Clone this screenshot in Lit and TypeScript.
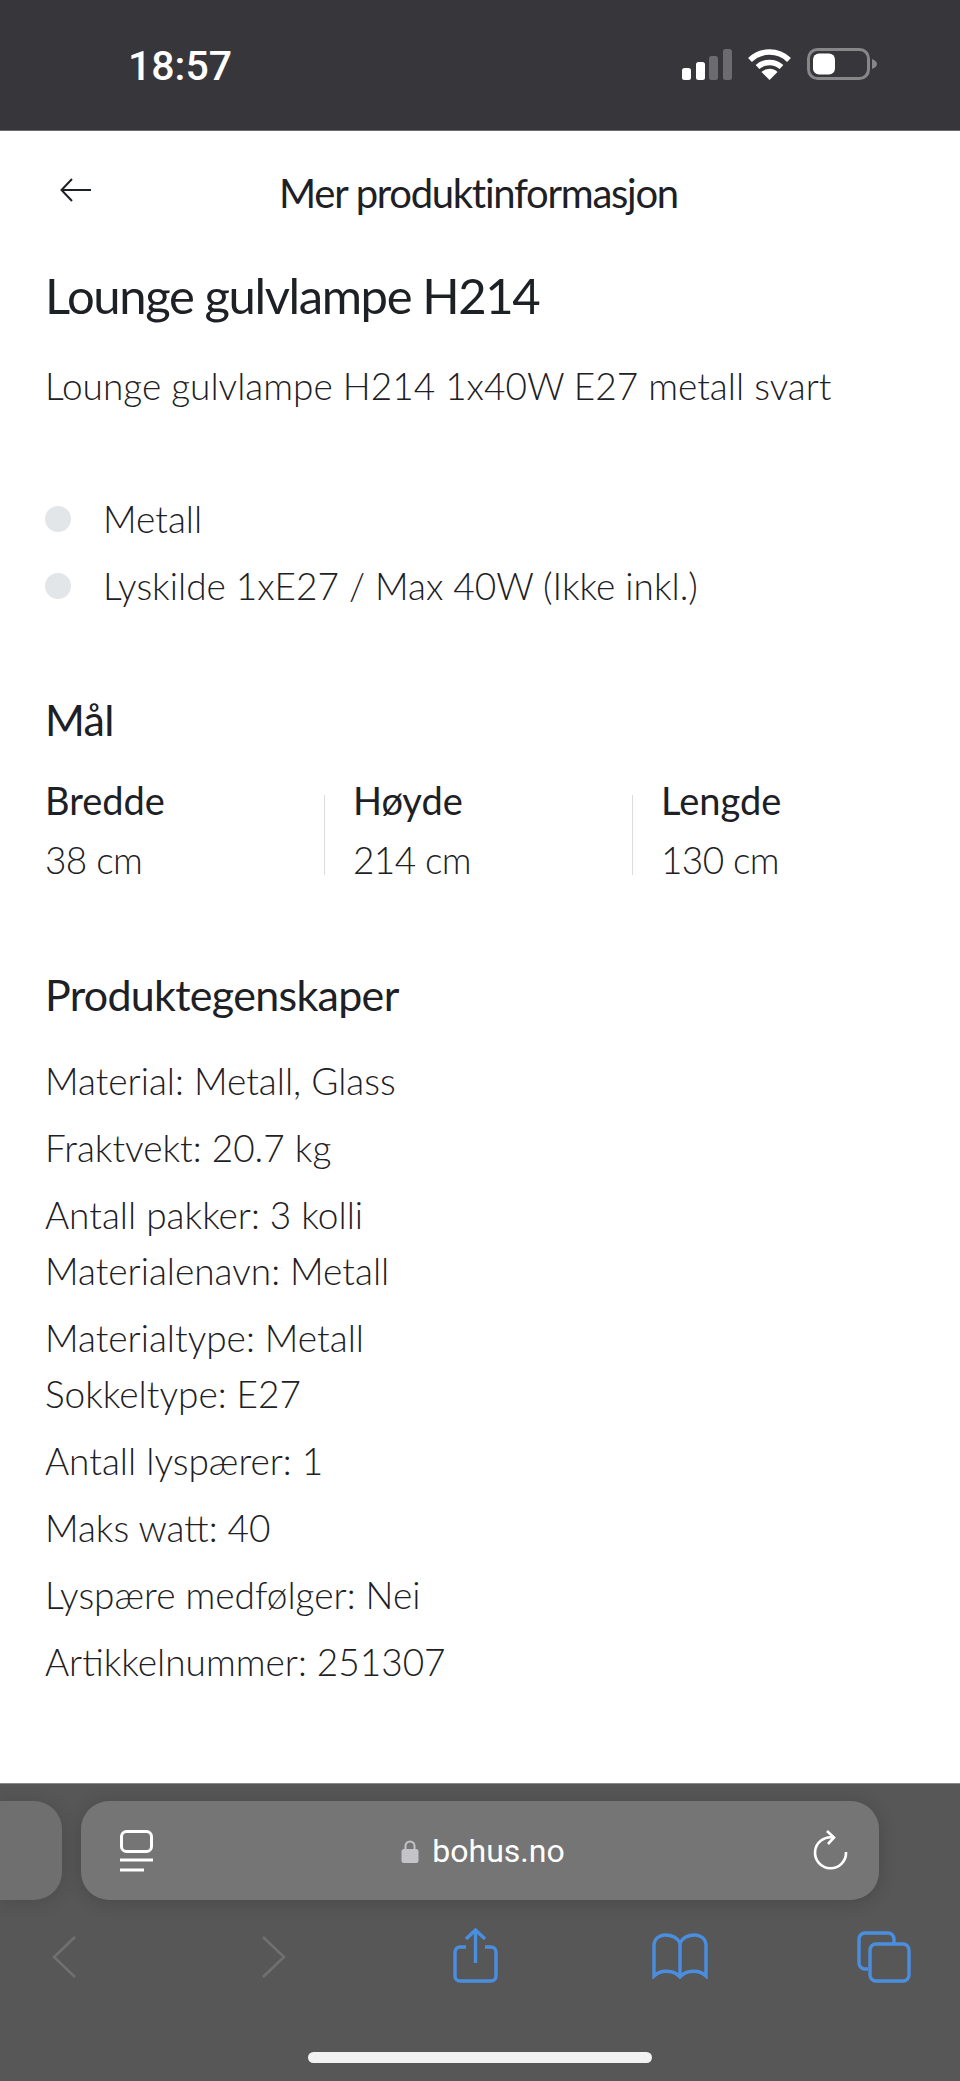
import { LitElement, html, css } from 'lit';
import { customElement } from 'lit/decorators.js';

const bullets = ['Metall', 'Lyskilde 1xE27 / Max 40W (Ikke inkl.)'];
const sizes = [
  ['Bredde', '38 cm'],
  ['Høyde', '214 cm'],
  ['Lengde', '130 cm'],
];
const props = [
  ['Material: Metall, Glass'],
  ['Fraktvekt: 20.7 kg'],
  ['Antall pakker: 3 kolli', 'Materialenavn: Metall'],
  ['Materialtype: Metall', 'Sokkeltype: E27'],
  ['Antall lyspærer: 1'],
  ['Maks watt: 40'],
  ['Lyspære medfølger: Nei'],
  ['Artikkelnummer: 251307'],
];

@customElement('app-root')
export class AppRoot extends LitElement {
  static styles = css`
    :host {
      display: block;
      width: 960px;
      height: 2081px;
      overflow: hidden;
      font-family: Lato, 'Noto Sans', sans-serif;
      color: #1d2024;
    }
    .page {
      display: flex;
      flex-direction: column;
      height: 2081px;
    }
    .status {
      height: 131px;
      flex: none;
      background: #37363b;
      border-bottom: 1px solid #6b6b6e;
      display: flex;
      align-items: center;
      justify-content: space-between;
      padding: 0 83px 0 128px;
      box-sizing: border-box;
      color: #fff;
    }
    .time {
      font-family: Roboto, sans-serif;
      font-size: 41px;
      font-weight: 500;
      margin-top: 1px;
    }
    .status-icons {
      display: flex;
      align-items: center;
      gap: 16px;
      margin-top: -2px;
    }
    .content {
      flex: 1;
      background: #fff;
      padding: 0 45px;
    }
    .topbar {
      height: 123px;
      display: flex;
      align-items: center;
      justify-content: center;
      position: relative;
    }
    .back {
      position: absolute;
      left: 15px;
      top: 47px;
    }
    .topbar-title {
      font-size: 40px;
      font-weight: 400;
      letter-spacing: -1.27px;
      margin-left: -3px;
    }
    h1 {
      margin: 13px 0 0;
      font-size: 49px;
      line-height: 56px;
      font-weight: 400;
      letter-spacing: -1.4px;
    }
    .desc {
      margin: 35px 0 0;
      font-size: 37px;
      line-height: 56px;
      font-weight: 300;
    }
    ul {
      list-style: none;
      margin: 77px 0 0;
      padding: 0;
      display: flex;
      flex-direction: column;
      gap: 11px;
    }
    li {
      display: flex;
      align-items: center;
      gap: 32px;
      font-size: 37px;
      line-height: 56px;
      font-weight: 300;
    }
    .dot {
      width: 26px;
      height: 26px;
      border-radius: 50%;
      background: #e2e6e8;
    }
    h2 {
      margin: 0;
      font-size: 43px;
      line-height: 56px;
      font-weight: 400;
      letter-spacing: -0.7px;
    }
    .measures {
      margin-top: 78px;
    }
    .grid {
      display: grid;
      grid-template-columns: 279px 308px 308px;
      margin-top: 32px;
    }
    .cell {
      padding-left: 28px;
    }
    .cell:first-child {
      padding-left: 0;
    }
    .cell + .cell {
      border-left: 1px solid #dcdcdc;
      height: 80px;
      margin-top: 15px;
    }
    .cell + .cell .cell-inner {
      margin-top: -15px;
    }
    .label {
      font-size: 38px;
      line-height: 40px;
      font-weight: 400;
    }
    .value {
      font-size: 37px;
      line-height: 40px;
      font-weight: 300;
      letter-spacing: -0.6px;
      margin-top: 20px;
    }
    .features {
      margin-top: 87px;
    }
    .prop-list {
      margin-top: 30px;
      display: flex;
      flex-direction: column;
      gap: 11px;
    }
    .prop {
      font-size: 37px;
      line-height: 56px;
      font-weight: 300;
    }
    .chrome {
      height: 298px;
      flex: none;
      background: #585757;
      border-top: 1px solid #8a8a8a;
      box-sizing: border-box;
      padding-top: 17px;
      display: flex;
      flex-direction: column;
    }
    .tabs-row {
      display: flex;
      gap: 19px;
      height: 99px;
      flex: none;
    }
    .prev-tab {
      width: 62px;
      background: #6f6f6f;
      border-radius: 0 28px 28px 0;
      box-shadow: 0 2px 18px rgba(0, 0, 0, 0.15);
    }
    .url {
      width: 798px;
      background: #757575;
      border-radius: 28px;
      box-shadow: 0 2px 18px rgba(0, 0, 0, 0.18);
      display: flex;
      align-items: center;
      justify-content: space-between;
      padding: 0 30px 0 38px;
      box-sizing: border-box;
    }
    .domain {
      display: flex;
      align-items: center;
      gap: 13px;
      color: #fff;
      font-family: Roboto, sans-serif;
      font-size: 32px;
      margin-left: -2px;
    }
    .toolbar {
      position: relative;
      flex: 1;
    }
    .toolbar svg {
      position: absolute;
    }
    .chev-back {
      left: 52px;
      top: 36px;
    }
    .chev-forward {
      left: 261px;
      top: 36px;
    }
    .share {
      left: 453px;
      top: 28px;
    }
    .book {
      left: 652px;
      top: 33px;
    }
    .pages {
      left: 857px;
      top: 31px;
    }
    .home {
      position: absolute;
      left: 308px;
      top: 152px;
      width: 344px;
      height: 11px;
      border-radius: 6px;
      background: #f2f2f2;
    }
  `;

  render() {
    return html`
      <div class="page">
        <div class="status">
          <span class="time">18:57</span>
          <div class="status-icons">
            <svg width="50" height="31" viewBox="0 0 50 31">
              <rect x="0" y="19" width="9" height="12" rx="2.5" fill="#fff" />
              <rect x="14" y="13" width="9" height="18" rx="2.5" fill="#fff" />
              <rect x="27" y="7" width="9" height="24" rx="2.5" fill="#6c6c70" />
              <rect x="41" y="0" width="9" height="31" rx="2.5" fill="#6c6c70" />
            </svg>
            <svg width="43" height="31" viewBox="0 0 43 31">
              <path d="M2 11 A28 28 0 0 1 41 11" fill="none" stroke="#fff" stroke-width="5.5" />
              <path d="M9.5 18 A18 18 0 0 1 33.5 18" fill="none" stroke="#fff" stroke-width="5.5" />
              <path d="M21.5 31 L13.5 23 A11.5 11.5 0 0 1 29.5 23 Z" fill="#fff" />
            </svg>
            <svg width="70" height="32" viewBox="0 0 70 32">
              <rect x="1.5" y="1.5" width="60" height="29" rx="9" fill="none" stroke="#87878a" stroke-width="3" />
              <rect x="6" y="5.5" width="22" height="21" rx="6" fill="#fff" />
              <path d="M65 11 C68 12 70 14 70 16 C70 18 68 20 65 21 Z" fill="#87878a" />
            </svg>
          </div>
        </div>

        <div class="content">
          <div class="topbar">
            <svg class="back" width="32" height="24" viewBox="0 0 32 24" fill="none" stroke="#1d2024" stroke-width="2">
              <path d="M31 12 H2 M12 1 L1.5 12 L12 23" />
            </svg>
            <span class="topbar-title">Mer produktinformasjon</span>
          </div>
          <h1>Lounge gulvlampe H214</h1>
          <p class="desc">Lounge gulvlampe H214 1x40W E27 metall svart</p>
          <ul>
            ${bullets.map((b) => html`<li><span class="dot"></span>${b}</li>`)}
          </ul>

          <section class="measures">
            <h2>Mål</h2>
            <div class="grid">
              ${sizes.map(
                ([label, value]) => html`
                  <div class="cell">
                    <div class="cell-inner">
                      <div class="label">${label}</div>
                      <div class="value">${value}</div>
                    </div>
                  </div>
                `,
              )}
            </div>
          </section>

          <section class="features">
            <h2>Produktegenskaper</h2>
            <div class="prop-list">
              ${props.map((lines) => html`<div class="prop">${lines.map((l) => html`<div>${l}</div>`)}</div>`)}
            </div>
          </section>
        </div>

        <div class="chrome">
          <div class="tabs-row">
            <div class="prev-tab"></div>
            <div class="url">
              <svg width="36" height="42" viewBox="0 0 36 42" fill="none" stroke="#fff" stroke-width="3">
                <rect x="2.5" y="1.5" width="30" height="20" rx="5" />
                <path d="M1 30 H34 M1 40 H25" />
              </svg>
              <div class="domain">
                <svg width="18" height="24" viewBox="0 0 18 24">
                  <path d="M4.5 11 V7 A4.5 4.5 0 0 1 13.5 7 V11" fill="none" stroke="#c3c3c8" stroke-width="2" />
                  <rect x="0.5" y="10" width="17" height="14" rx="2.5" fill="#c3c3c8" />
                </svg>
                <span>bohus.no</span>
              </div>
              <svg width="36" height="42" viewBox="0 0 36 42" fill="none" stroke="#fff" stroke-width="2.6">
                <path d="M20 7.5 A15.5 15.5 0 1 0 33 22" />
                <path d="M14 1 L21 7.5 L15 14" />
              </svg>
            </div>
          </div>
          <div class="toolbar">
            <svg class="chev-back" width="25" height="42" viewBox="0 0 25 42" fill="none" stroke="#707070" stroke-width="2.6">
              <path d="M23 1 L2 21 L23 41" />
            </svg>
            <svg class="chev-forward" width="25" height="42" viewBox="0 0 25 42" fill="none" stroke="#707070" stroke-width="2.6">
              <path d="M2 1 L23 21 L2 41" />
            </svg>
            <svg class="share" width="45" height="55" viewBox="0 0 45 55" fill="none" stroke="#4a8ee0" stroke-width="3.4">
              <path d="M13 19 H7 A5 5 0 0 0 2 24 V48 A5 5 0 0 0 7 53 H38 A5 5 0 0 0 43 48 V24 A5 5 0 0 0 38 19 H32" />
              <path d="M22.5 35 V2 M13 11 L22.5 2 L32 11" />
            </svg>
            <svg class="book" width="56" height="46" viewBox="0 0 56 46" fill="none" stroke="#4a8ee0" stroke-width="3.4">
              <path d="M28 10 C25 4 20 2 13 2 C8 2 3 5 2 11 V43 C8 37 21 36 28 44 C35 36 48 37 54 43 V11 C53 5 48 2 43 2 C36 2 31 4 28 10 Z" />
              <path d="M28 10 V42" />
            </svg>
            <svg class="pages" width="54" height="52" viewBox="0 0 54 52" fill="none" stroke="#4a8ee0" stroke-width="3.4">
              <path d="M11 38 H8 A6 6 0 0 1 2 32 V8 A6 6 0 0 1 8 2 H31 A6 6 0 0 1 37 8 V12" />
              <rect x="13" y="13" width="39" height="37" rx="6" />
            </svg>
            <div class="home"></div>
          </div>
        </div>
      </div>
    `;
  }
}
